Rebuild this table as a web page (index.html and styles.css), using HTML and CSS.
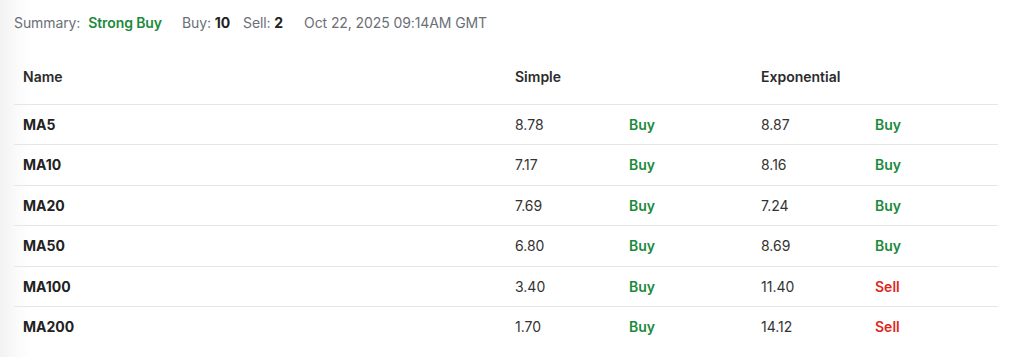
FILE: index.html
```html
<!DOCTYPE html>
<html>
<head>
<meta charset="utf-8">
<link rel="stylesheet" href="styles.css">
</head>
<body>
<div class="wrap">
  <div class="summary">
    <span class="label">Summary:</span>
    <span class="strong buy">Strong Buy</span>
    <span class="count"><span class="label">Buy:</span> <b>10</b></span>
    <span class="count"><span class="label">Sell:</span> <b>2</b></span>
    <span class="label date">Oct 22, 2025 09:14AM GMT</span>
  </div>
  <table class="ma">
    <colgroup>
      <col class="c-name"><col class="c-val"><col class="c-sig"><col class="c-val"><col class="c-sig">
    </colgroup>
    <thead>
      <tr><th>Name</th><th colspan="2">Simple</th><th colspan="2">Exponential</th></tr>
    </thead>
    <tbody>
      <tr><td class="name">MA5</td><td>8.78</td><td class="buy">Buy</td><td>8.87</td><td class="buy">Buy</td></tr>
      <tr><td class="name">MA10</td><td>7.17</td><td class="buy">Buy</td><td>8.16</td><td class="buy">Buy</td></tr>
      <tr><td class="name">MA20</td><td>7.69</td><td class="buy">Buy</td><td>7.24</td><td class="buy">Buy</td></tr>
      <tr><td class="name">MA50</td><td>6.80</td><td class="buy">Buy</td><td>8.69</td><td class="buy">Buy</td></tr>
      <tr><td class="name">MA100</td><td>3.40</td><td class="buy">Buy</td><td>11.40</td><td class="sell">Sell</td></tr>
      <tr class="last"><td class="name">MA200</td><td>1.70</td><td class="buy">Buy</td><td>14.12</td><td class="sell">Sell</td></tr>
    </tbody>
  </table>
</div>
</body>
</html>
```
FILE: styles.css
```css
html, body { margin: 0; padding: 0; }
body {
  font-family: Inter, "Noto Sans", sans-serif;
  font-size: 14px;
  color: #2b2b2b;
  background: linear-gradient(to right, #f2f2f2 0px, #fbfbfb 18px, #ffffff 32px);
  min-height: 357px;
}
.wrap { padding: 13px 26px 0 14px; }
.summary {
  display: flex;
  align-items: baseline;
  height: 20px;
  line-height: 20px;
  letter-spacing: -0.1px;
}
.label { color: #6b6f76; }
.summary .strong { margin-left: 8px; font-weight: 600; }
.summary .count { margin-left: 20px; }
.summary .count + .count { margin-left: 13px; }
.summary .count b { font-weight: 700; color: #222; }
.summary .date { margin-left: 21px; }
.buy { color: #1b8a3c; font-weight: 600; }
.sell { color: #e0261d; font-weight: 600; }
.ma {
  width: 100%;
  border-collapse: collapse;
  margin-top: 24px;
  table-layout: fixed;
}
.c-name { width: 492px; }
.c-val { width: 114px; }
.c-sig { width: 132px; }
.ma th {
  text-align: left;
  font-weight: 600;
  color: #2b2b2b;
  padding: 10px 9px 17px;
  line-height: 20px;
  border-bottom: 1px solid #e6e6e6;
}
.ma td {
  padding: 10px 9px 9.4px;
  line-height: 20px;
  border-bottom: 1px solid #e6e6e6;
}
.ma td:not(.buy):not(.sell):not(.name) { color: #333; }
.ma td.name { font-weight: 700; color: #222; }
.ma tr.last td { border-bottom: none; }
```
